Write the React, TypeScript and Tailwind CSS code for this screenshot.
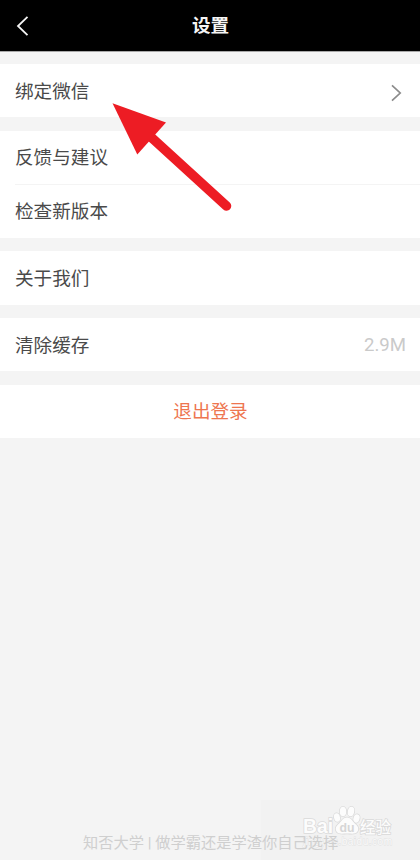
import type { ReactNode } from "react";

const Row = ({ label, children }: { label: string; children?: ReactNode }) => {
  return (
    <div className="flex h-[53px] items-center justify-between bg-white pl-[15px] pr-[14px]">
      <span className="pt-[3px] text-[18.6px] leading-[27px] text-[#4a4a4a]">{label}</span>
      {children}
    </div>
  );
};

const Header = () => {
  return (
    <header className="relative flex h-[52px] shrink-0 justify-center border-b border-[#a8a8a8] bg-black pt-[13px]">
      <svg className="absolute left-[16px] top-[15px]" width="14" height="22" viewBox="0 0 14 22" fill="none">
        <path d="M11.5 1.8 2 11l9.5 9.2" stroke="#f4f4f4" strokeWidth="1.8" />
      </svg>
      <h1 className="pl-px text-[18.6px] font-bold leading-[27px] text-[#f5f5f5]">设置</h1>
    </header>
  );
};

const Pointer = () => {
  return (
    <svg className="absolute left-[100px] top-[90px]" width="140" height="130" viewBox="0 0 140 130">
      <path d="M52 48 126.5 116" stroke="#ed1c24" strokeWidth="9.6" strokeLinecap="round" />
      <path d="M12.5 13.3 66 32.5 37.3 64.5z" fill="#ed1c24" />
    </svg>
  );
};

const Watermark = () => {
  return (
    <div className="absolute bottom-0 right-0 h-[60px] w-[159px] bg-[#f2f2f2]">
      <svg width="159" height="60" viewBox="0 0 159 60" fontFamily="'Liberation Sans', 'Noto Sans CJK SC', sans-serif">
        <g fill="#fcfcfc" stroke="#dadada" strokeWidth="1.6" paintOrder="stroke">
          <text x="42" y="33" fontSize="20" fontWeight="700" textLength="30" lengthAdjust="spacingAndGlyphs">Bai</text>
          <ellipse cx="76" cy="17.5" rx="3" ry="4.3" transform="rotate(-12 76 17.5)" />
          <ellipse cx="82" cy="11.5" rx="3.2" ry="4.8" />
          <ellipse cx="90" cy="11.5" rx="3.2" ry="4.8" transform="rotate(10 90 11.5)" />
          <ellipse cx="95.5" cy="18.5" rx="3" ry="4.3" transform="rotate(18 95.5 18.5)" />
          <path d="M86 17.5c4.5 0 5.5 4.5 9 7 2.5 2 3 5 1.3 7.300-2 2.800-6 1.700-10.300 1.700s-8.300 1-10.300-1.700c-1.700-2.300-1.200-5.300 1.300-7.300 3.500-2.500 4.500-7 9-7z" />
          <text x="99" y="33" fontSize="15.5" fontWeight="500" fontFamily="'Noto Sans CJK SC', sans-serif">经验</text>
        </g>
        <text x="78.5" y="31.5" fontSize="13" fontWeight="700" fill="#d6d6d6" textLength="15" lengthAdjust="spacingAndGlyphs">du</text>
        <text x="42" y="45" fontSize="10" fill="#fafafa" stroke="#e2e2e2" strokeWidth="0.9" paintOrder="stroke" textLength="89">jingyan.baidu.com</text>
      </svg>
    </div>
  );
};

export default function App() {
  return (
    <div className="relative flex h-[860px] w-[420px] flex-col overflow-hidden bg-[#f4f4f4] font-['Roboto','Noto_Sans_CJK_SC',sans-serif]">
      <Header />
      <main className="flex flex-col gap-[13.5px] pt-[12px]">
        <Row label="绑定微信">
          <svg className="mt-[4px] mr-[3px]" width="12" height="18" viewBox="0 0 12 18" fill="none">
            <path d="M1 1.3 9.2 9 1 16.7" stroke="#8b8b8b" strokeWidth="1.7" />
          </svg>
        </Row>
        <section className="bg-white">
          <Row label="反馈与建议" />
          <div className="ml-[15px] h-px bg-[#f4f4f4]" />
          <Row label="检查新版本" />
        </section>
        <section className="bg-white pb-[0.5px]">
          <Row label="关于我们" />
        </section>
        <Row label="清除缓存">
          <span className="pt-[2px] text-[18.6px] leading-[27px] text-[#cacaca]">2.9M</span>
        </Row>
        <button className="flex h-[53px] items-center justify-center bg-white pl-px pt-[2px] text-[18.6px] leading-[27px] text-[#ee7650]">
          退出登录
        </button>
      </main>
      <Watermark />
      <footer className="absolute bottom-[6px] left-[83px] whitespace-pre text-[15.25px] leading-[22px] text-[#cfcfcf]">
        知否大学 | 做学霸还是学渣你自己选择
      </footer>
      <Pointer />
    </div>
  );
}
